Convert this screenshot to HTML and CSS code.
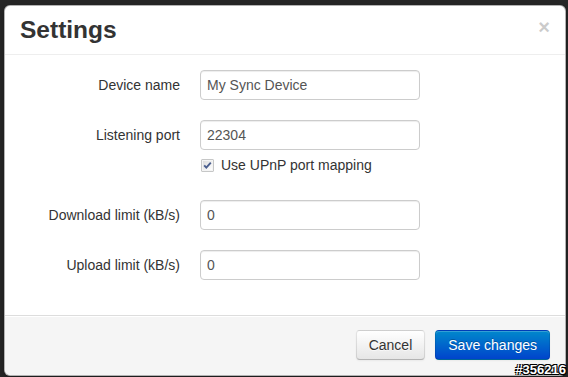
FILE: index.html
```html
<!DOCTYPE html>
<html lang="en">
<head>
<meta charset="utf-8">
<title>Settings</title>
<link rel="stylesheet" href="styles.css">
</head>
<body>
<div class="page">
  <div class="modal">
    <div class="modal-header">
      <h3 class="modal-title">Settings</h3>
      <button class="close" type="button">&times;</button>
    </div>
    <div class="modal-body">
      <form class="form-horizontal">
        <div class="control-group">
          <label class="control-label">Device name</label>
          <div class="controls"><input class="text-input" type="text" value="My Sync Device"></div>
        </div>
        <div class="control-group group-port">
          <label class="control-label">Listening port</label>
          <div class="controls">
            <input class="text-input" type="text" value="22304">
            <label class="checkbox">
              <span class="check-box"><svg width="13" height="13" viewBox="0 0 13 13"><defs><linearGradient id="cbg" x1="0" y1="0" x2="1" y2="1"><stop offset="0" stop-color="#dcdcdc"/><stop offset="1" stop-color="#ffffff"/></linearGradient></defs><rect x="0.5" y="0.5" width="12" height="12" fill="#8e8f8f"/><rect x="1" y="1" width="11" height="11" fill="#f4f4f4"/><rect x="2" y="2" width="9" height="9" fill="url(#cbg)"/><path d="M3.2 6.4 L5.3 8.6 L9.8 3.6" fill="none" stroke="#4a5e8e" stroke-width="1.9"/></svg></span>
              <span>Use UPnP port mapping</span>
            </label>
          </div>
        </div>
        <div class="control-group">
          <label class="control-label">Download limit (kB/s)</label>
          <div class="controls"><input class="text-input" type="text" value="0"></div>
        </div>
        <div class="control-group">
          <label class="control-label">Upload limit (kB/s)</label>
          <div class="controls"><input class="text-input" type="text" value="0"></div>
        </div>
      </form>
    </div>
    <div class="modal-footer">
      <button class="btn" type="button">Cancel</button>
      <button class="btn btn-primary" type="button">Save changes</button>
    </div>
  </div>
  <div class="watermark">#356216</div>
</div>
</body>
</html>
```
FILE: styles.css
```css
* { box-sizing: content-box; }
html, body {
  margin: 0;
  padding: 0;
  background: #262626;
}
body {
  font-family: "Liberation Sans", Arial, Helvetica, sans-serif;
  font-size: 14px;
  line-height: 20px;
  color: #333;
}
.page {
  position: relative;
  width: 568px;
  height: 377px;
  overflow: hidden;
  padding-top: 5px;
  box-sizing: border-box;
}
.modal {
  width: 560px;
  margin-left: 4px;
  background: #fff;
  border: 1px solid rgba(0, 0, 0, 0.3);
  border-radius: 6px;
  box-shadow: 0 3px 7px rgba(0, 0, 0, 0.3);
}
.modal-header {
  display: flex;
  justify-content: space-between;
  align-items: flex-start;
  padding: 9px 15px;
  border-bottom: 1px solid #eee;
}
.modal-title {
  margin: 0;
  font-size: 24.5px;
  line-height: 30px;
  font-weight: bold;
  color: #333;
}
.close {
  margin-top: 2px;
  padding: 0;
  border: 0;
  background: transparent;
  font-family: "Liberation Sans", Arial, sans-serif;
  font-size: 20px;
  font-weight: bold;
  line-height: 20px;
  color: #000;
  opacity: 0.2;
}
.modal-body {
  padding: 15px;
}
.form-horizontal {
  margin: 0;
}
.control-group {
  display: grid;
  grid-template-columns: 160px 1fr;
  column-gap: 20px;
  margin-bottom: 20px;
}
.group-port {
  margin-bottom: 25px;
}
.control-label {
  padding-top: 5px;
  text-align: right;
  color: #333;
}
.controls {
  display: flex;
  flex-direction: column;
  align-items: flex-start;
}
.text-input {
  width: 206px;
  height: 20px;
  padding: 4px 6px;
  margin: 0;
  font-family: "Liberation Sans", Arial, sans-serif;
  font-size: 14px;
  line-height: 20px;
  color: #555;
  background: #fff;
  border: 1px solid #ccc;
  border-radius: 4px;
  box-shadow: inset 0 1px 1px rgba(0, 0, 0, 0.075);
  outline: none;
}
.checkbox {
  display: flex;
  align-items: center;
  gap: 7px;
  margin-top: 5px;
  height: 20px;
  padding-left: 1px;
  color: #333;
}
.check-box {
  display: block;
  width: 13px;
  height: 13px;
  margin-top: 1px;
}
.check-box svg { display: block; }
.modal-footer {
  display: flex;
  justify-content: flex-end;
  gap: 10px;
  padding: 14px 15px 15px;
  background: #f5f5f5;
  border-top: 1px solid #ddd;
  border-radius: 0 0 6px 6px;
  box-shadow: inset 0 1px 0 #fff;
}
.btn {
  padding: 4px 12px;
  margin: 0;
  font-family: "Liberation Sans", Arial, sans-serif;
  font-size: 14px;
  line-height: 20px;
  color: #333;
  text-shadow: 0 1px 1px rgba(255, 255, 255, 0.75);
  background-color: #f5f5f5;
  background-image: linear-gradient(to bottom, #ffffff, #e6e6e6);
  border: 1px solid #ccc;
  border-color: rgba(0, 0, 0, 0.1) rgba(0, 0, 0, 0.1) rgba(0, 0, 0, 0.25);
  border-bottom-color: #b3b3b3;
  border-radius: 4px;
  box-shadow: inset 0 1px 0 rgba(255, 255, 255, 0.2), 0 1px 2px rgba(0, 0, 0, 0.05);
}
.btn-primary {
  color: #fff;
  text-shadow: 0 -1px 0 rgba(0, 0, 0, 0.25);
  background-color: #006dcc;
  background-image: linear-gradient(to bottom, #0088cc, #0044cc);
  border-color: rgba(0, 0, 0, 0.1) rgba(0, 0, 0, 0.1) rgba(0, 0, 0, 0.25);
}
.watermark {
  position: absolute;
  right: 2px;
  bottom: 0;
  font-family: "Liberation Sans", Arial, sans-serif;
  font-size: 13px;
  font-weight: bold;
  line-height: 15px;
  color: #fff;
  text-shadow: -1px -1px 0 #000, 1px -1px 0 #000, -1px 1px 0 #000, 1px 1px 0 #000;
}
```
